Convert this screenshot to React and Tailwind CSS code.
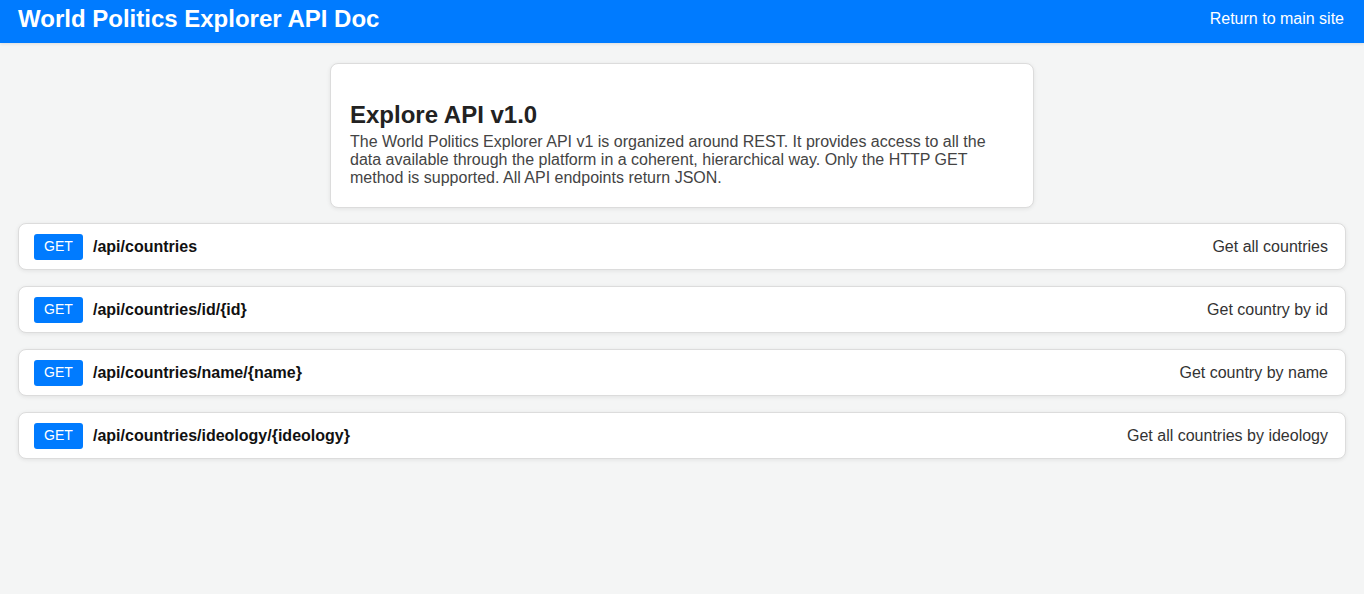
const endpoints = [
  { path: '/api/countries', desc: 'Get all countries' },
  { path: '/api/countries/id/{id}', desc: 'Get country by id' },
  { path: '/api/countries/name/{name}', desc: 'Get country by name' },
  { path: '/api/countries/ideology/{ideology}', desc: 'Get all countries by ideology' },
]

export default function App() {
  return (
    <div className="min-h-[594px] bg-[#f4f5f5] font-['Liberation_Sans',Arial,sans-serif]">
      <header className="h-[43px] bg-[#007bff] flex items-center justify-between px-[18px] pb-[5px] shadow-[0_1px_3px_rgba(0,0,0,0.1)]">
        <h1 className="text-[24px] font-bold text-white leading-none">World Politics Explorer API Doc</h1>
        <a className="text-[16px] text-white pr-[2px]" href="#">Return to main site</a>
      </header>

      <main className="px-[18px] pt-[20px]">
        <div className="mx-auto w-[704px] bg-white border border-[#dcdcdc] rounded-[8px] shadow-[0_1px_4px_rgba(0,0,0,0.08)] px-[19px] pt-[37px] pb-[20px]">
          <h2 className="text-[24px] font-bold text-[#222] leading-[28px]">Explore API v1.0</h2>
          <p className="mt-[4px] text-[16px] leading-[18px] text-[#444]">
            The World Politics Explorer API v1 is organized around REST. It provides access to all the
            data available through the platform in a coherent, hierarchical way. Only the HTTP GET
            method is supported. All API endpoints return JSON.
          </p>
        </div>

        <div className="mt-[15px] flex flex-col gap-[16px]">
          {endpoints.map((e) => (
            <div
              key={e.path}
              className="h-[47px] flex items-center bg-white border border-[#dcdcdc] rounded-[8px] shadow-[0_1px_4px_rgba(0,0,0,0.08)] pl-[15px] pr-[17px]"
            >
              <span className="h-[26px] w-[49px] flex items-center justify-center bg-[#007bff] text-white text-[14px] rounded-[3px]">
                GET
              </span>
              <span className="ml-[10px] text-[16px] font-bold text-[#111]">{e.path}</span>
              <span className="ml-auto text-[16px] text-[#333]">{e.desc}</span>
            </div>
          ))}
        </div>
      </main>
    </div>
  )
}
